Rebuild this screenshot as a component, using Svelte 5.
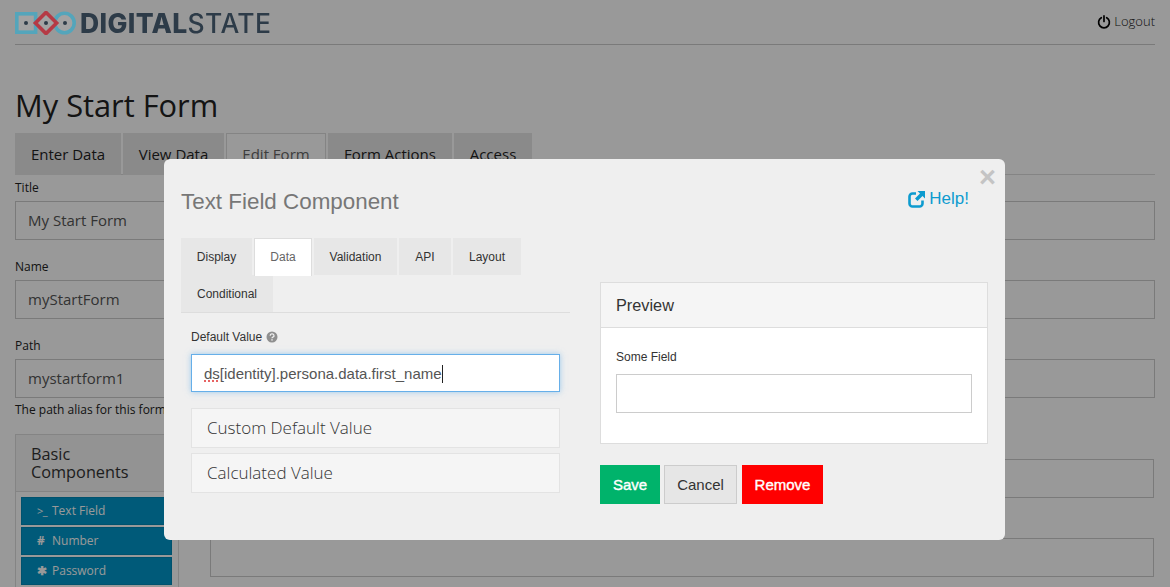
<script>
  const pageTabs = [
    { label: 'Enter Data', w: 106 },
    { label: 'View Data', w: 101 },
    { label: 'Edit Form', w: 100, active: true },
    { label: 'Form Actions', w: 124 },
    { label: 'Access', w: 78 }
  ];
  const fields = [
    { label: 'Title', value: 'My Start Form' },
    { label: 'Name', value: 'myStartForm' },
    { label: 'Path', value: 'mystartform1' }
  ];
  const modalTabs = [
    { label: 'Display', w: 71 },
    { label: 'Data', w: 58, active: true },
    { label: 'Validation', w: 83 },
    { label: 'API', w: 52 },
    { label: 'Layout', w: 68 },
    { label: 'Conditional', w: 92 }
  ];
</script>

<div class="page">
  <header class="topbar">
    <svg class="logo-mark" width="65" height="24" viewBox="0 0 65 24" aria-hidden="true">
      <rect x="1.800" y="2.800" width="18.800" height="18.400" fill="#a3a3a3" stroke="#54a5bb" stroke-width="3.600" />
      <circle cx="49.500" cy="12" r="9.700" fill="#a3a3a3" stroke="#54a5bb" stroke-width="3.600" />
      <rect x="23.500" y="4.500" width="15" height="15" transform="rotate(45 31 12)" fill="#a3a3a3" stroke="#b53a45" stroke-width="3.600" />
      <circle cx="11" cy="12" r="2" fill="#2d3b48" />
      <circle cx="31" cy="12" r="2" fill="#2d3b48" />
      <circle cx="50" cy="12" r="2" fill="#2d3b48" />
    </svg>
    <span class="wordmark"><b>DIGITAL</b>STATE</span>
    <span class="logout">
      <svg width="14" height="14" viewBox="0 0 14 14" aria-hidden="true">
        <path d="M4.300 2.700a5.400 5.400 0 1 0 5.400 0" fill="none" stroke="#000" stroke-width="1.700" stroke-linecap="round" />
        <path d="M7 .9v5.600" fill="none" stroke="#000" stroke-width="1.700" stroke-linecap="round" />
      </svg>
      Logout
    </span>
  </header>

  <h1>My Start Form</h1>

  <nav class="page-tabs">
    {#each pageTabs as t}
      <span class="page-tab" class:active={t.active} style="width:{t.w}px">{t.label}</span>
    {/each}
  </nav>

  {#each fields as f}
    <div class="field">
      <div class="field-label">{f.label}</div>
      <div class="field-input">{f.value}</div>
    </div>
  {/each}
  <p class="hint">The path alias for this form.</p>

  <div class="builder">
    <aside class="components">
      <div class="components-head">Basic Components</div>
      <div class="components-body">
        <div class="comp"><span class="glyph term">&gt;_</span>Text Field</div>
        <div class="comp"><span class="glyph">#</span>Number</div>
        <div class="comp"><span class="glyph">✱</span>Password</div>
      </div>
    </aside>
    <div class="canvas">
      <div class="canvas-box"></div>
      <div class="canvas-box"></div>
    </div>
  </div>
</div>

<div class="backdrop"></div>

<div class="modal">
  <span class="close">×</span>
  <div class="modal-head">
    <h2>Text Field Component</h2>
    <span class="help">
      <svg width="17" height="17" viewBox="0 0 17 17" aria-hidden="true">
        <path d="M8 2.500H4.500a3 3 0 0 0-3 3v7a3 3 0 0 0 3 3h7a3 3 0 0 0 3-3V9.500" fill="none" stroke="#0d9bcf" stroke-width="2.600" />
        <path d="M9.500 0H17v7.500l-2.500-2.500-5 5-2.500-2.500 5-5z" fill="#0d9bcf" />
      </svg>
      Help!
    </span>
  </div>
  <div class="modal-cols">
    <div class="left">
      <div class="tabs">
        {#each modalTabs as t}
          <span class="tab" class:active={t.active} style="width:{t.w}px">{t.label}</span>
        {/each}
      </div>
      <div class="pane">
        <div class="dv-label">
          Default Value
          <svg width="12" height="12" viewBox="0 0 12 12" aria-hidden="true">
            <circle cx="6" cy="6" r="5.500" fill="#8f8f8f" />
            <path d="M4.200 4.700a1.900 1.700 0 1 1 2.700 1.500c-.6.300-.9.500-.9 1.100" fill="none" stroke="#efefef" stroke-width="1.300" />
            <rect x="5.300" y="8.200" width="1.400" height="1.400" fill="#efefef" />
          </svg>
        </div>
        <div class="dv-input"><span class="typo">ds</span>[identity].persona.data.first_name<i class="caret"></i></div>
        <div class="acc">Custom Default Value</div>
        <div class="acc second">Calculated Value</div>
      </div>
    </div>
    <div class="right">
      <section class="preview">
        <div class="preview-head">Preview</div>
        <div class="preview-body">
          <div class="pv-label">Some Field</div>
          <div class="pv-input"></div>
        </div>
      </section>
      <div class="actions">
        <button class="btn save">Save</button>
        <button class="btn cancel">Cancel</button>
        <button class="btn remove">Remove</button>
      </div>
    </div>
  </div>
</div>

<style>
  :global(body) {
    margin: 0;
    background: #fff;
    overflow: hidden;
  }
  .page {
    height: 587px;
    overflow: hidden;
    padding: 0 15px;
    box-sizing: border-box;
    font-family: "Open Sans", sans-serif;
    color: #333;
  }
  .topbar {
    height: 45px;
    box-sizing: border-box;
    border-bottom: 1px solid #ccc;
    display: flex;
    align-items: flex-start;
  }
  .logo-mark {
    margin-top: 11px;
    flex: none;
    position: relative;
    z-index: 2;
  }
  .wordmark {
    position: relative;
    z-index: 2;
    font-family: Inter, sans-serif;
    font-weight: 500;
    font-size: 26.500px;
    line-height: 47px;
    color: #2d3b48;
    letter-spacing: 0.35px;
  }
  .wordmark b {
    font-weight: 800;
  }
  .logout {
    margin-left: auto;
    margin-top: 12px;
    font-size: 13px;
    font-weight: 300;
    line-height: 19px;
    color: #222;
    display: flex;
    align-items: center;
    gap: 3px;
  }
  h1 {
    margin: 41px 0 0;
    font-size: 30.800px;
    font-weight: 400;
    line-height: 38px;
    height: 47px;
    color: #222;
  }
  .page-tabs {
    display: flex;
    gap: 2px;
    height: 42px;
    box-sizing: border-box;
    border-bottom: 1px solid #ddd;
  }
  .page-tab {
    box-sizing: border-box;
    background: #e7e7e7;
    font-size: 15px;
    line-height: 42px;
    text-align: center;
    color: #222;
    height: 42px;
  }
  .page-tab.active {
    background: #fff;
    border: 1px solid #ddd;
    border-bottom: 0;
    color: #666;
    line-height: 40px;
  }
  .field {
    height: 79px;
  }
  .field-label {
    font-size: 12px;
    line-height: 16px;
    padding-top: 5px;
    height: 26px;
    box-sizing: border-box;
    color: #222;
  }
  .field-input {
    box-sizing: border-box;
    height: 39px;
    border: 1px solid #ccc;
    padding: 0 12px;
    font-size: 15px;
    line-height: 36px;
    color: #555;
  }
  .hint {
    margin: -10px 0 0;
    font-size: 12px;
    line-height: 16px;
    color: #222;
  }
  .builder {
    display: flex;
    margin-top: 16px;
    gap: 31px;
    align-items: flex-start;
  }
  .components {
    width: 164px;
    flex: none;
    border: 1px solid #ddd;
    box-sizing: border-box;
  }
  .components-head {
    padding: 10px 15px;
    background: #f5f5f5;
    border-bottom: 1px solid #ddd;
    font-size: 16.300px;
    line-height: 18px;
    color: #333;
  }
  .components-body {
    padding: 5px;
    display: flex;
    flex-direction: column;
    gap: 2px;
  }
  .comp {
    height: 28px;
    background: #0097ca;
    border: 1px solid #0089b8;
    box-sizing: border-box;
    color: #fff;
    font-size: 12px;
    font-weight: 400;
    line-height: 26px;
    padding-left: 15px;
    width: 151px;
    display: flex;
  }
  .glyph {
    font-weight: 700;
    width: 15px;
    flex: none;
  }
  .term {
    font-weight: 400;
    font-size: 11px;
    letter-spacing: -0.5px;
  }
  .canvas {
    flex: 1;
    padding-top: 25px;
    padding-right: 1px;
  }
  .canvas-box {
    height: 39px;
    border: 1px solid #ccc;
    box-sizing: border-box;
    margin-bottom: 40px;
  }
  .backdrop {
    position: fixed;
    inset: 0;
    background: rgba(0, 0, 0, 0.4);
  }
  .modal {
    position: absolute;
    left: 164px;
    top: 159px;
    width: 841px;
    height: 381px;
    box-sizing: border-box;
    background: #efefef;
    border-radius: 6px;
    padding: 0 17px;
    font-family: "Liberation Sans", Arial, sans-serif;
    color: #333;
    z-index: 3;
  }
  .close {
    position: absolute;
    right: 9px;
    top: 4px;
    font-size: 29px;
    line-height: 28px;
    font-weight: 700;
    color: #c4c4c4;
  }
  .modal-head {
    height: 79px;
    display: flex;
    justify-content: space-between;
    align-items: flex-start;
    padding-right: 19px;
  }
  h2 {
    margin: 28px 0 0;
    font-size: 22.400px;
    line-height: 30px;
    font-weight: 400;
    color: #777;
  }
  .help {
    margin-top: 29px;
    color: #0d9bcf;
    font-size: 17px;
    line-height: 22px;
    display: flex;
    align-items: center;
    gap: 4px;
  }
  .modal-cols {
    display: grid;
    grid-template-columns: 389px 388px;
    gap: 30px;
  }
  .tabs {
    display: flex;
    flex-wrap: wrap;
    column-gap: 2px;
    border-bottom: 1px solid #ddd;
  }
  .tab {
    box-sizing: border-box;
    height: 37px;
    line-height: 38px;
    background: #e7e7e7;
    font-size: 12px;
    text-align: center;
    color: #333;
  }
  .tab.active {
    background: #fff;
    border: 1px solid #ddd;
    border-bottom: 0;
    color: #666;
    line-height: 36px;
    height: 38px;
    margin-bottom: -1px;
    position: relative;
    z-index: 1;
  }
  .pane {
    padding: 16px 10px 0;
  }
  .dv-label {
    font-size: 12px;
    line-height: 17px;
    height: 25px;
    display: flex;
    gap: 4px;
    align-items: flex-start;
  }
  .dv-label svg {
    margin-top: 2px;
  }
  .dv-input {
    box-sizing: border-box;
    height: 38px;
    background: #fff;
    border: 1px solid #66afe9;
    box-shadow: 0 0 6px rgba(102, 175, 233, 0.6);
    padding: 2px 12px 0;
    font-size: 15px;
    line-height: 34px;
    color: #555;
    display: flex;
    align-items: center;
  }
  .typo {
    text-decoration: underline dotted #e03030;
    text-underline-offset: 2px;
  }
  .caret {
    display: inline-block;
    width: 1px;
    height: 18px;
    background: #222;
  }
  .acc {
    box-sizing: border-box;
    height: 40px;
    margin-top: 16px;
    background: #f5f5f5;
    border: 1px solid #e3e3e3;
    padding: 0 15px;
    font-family: "Open Sans", sans-serif;
    font-size: 17px;
    font-weight: 300;
    line-height: 38px;
    color: #333;
  }
  .acc.second {
    margin-top: 5px;
  }
  .right {
    padding-top: 44px;
  }
  .preview {
    background: #fff;
    border: 1px solid #ddd;
    box-sizing: border-box;
    height: 162px;
  }
  .preview-head {
    height: 45px;
    background: #f5f5f5;
    border-bottom: 1px solid #ddd;
    box-sizing: border-box;
    padding: 0 15px;
    font-size: 16.300px;
    line-height: 45px;
    color: #333;
  }
  .preview-body {
    padding: 21px 15px 0;
  }
  .pv-label {
    font-size: 12px;
    line-height: 17px;
    height: 25px;
    color: #333;
  }
  .pv-input {
    box-sizing: border-box;
    height: 39px;
    border: 1px solid #ccc;
    background: #fff;
  }
  .actions {
    display: flex;
    margin-top: 21px;
    gap: 4px;
  }
  .btn {
    box-sizing: border-box;
    height: 39px;
    border: 1px solid transparent;
    padding: 0;
    font-family: "Liberation Sans", Arial, sans-serif;
    font-size: 15px;
    color: #fff;
    font-weight: 400;
    -webkit-text-stroke: 0.4px #fff;
  }
  .save {
    width: 60px;
    background: #00b36b;
  }
  .cancel {
    width: 73px;
    background: #e6e6e6;
    border-color: #ccc;
    color: #333;
    -webkit-text-stroke: 0;
  }
  .remove {
    width: 81px;
    margin-left: 1px;
    background: #f00;
  }
</style>
